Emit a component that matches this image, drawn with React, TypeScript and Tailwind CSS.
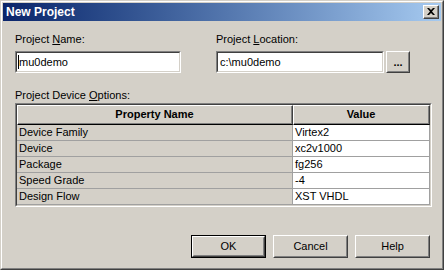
import React from 'react';

const rows = [
    { name: 'Device Family', value: 'Virtex2' },
    { name: 'Device', value: 'xc2v1000' },
    { name: 'Package', value: 'fg256' },
    { name: 'Speed Grade', value: '-4' },
    { name: 'Design Flow', value: 'XST VHDL' },
];

const Field = ({ value, caret }: { value: string; caret?: boolean }) => (
    <div className="h-[22px] flex-1 border border-t-[#808080] border-l-[#808080] border-r-white border-b-white">
        <div className="h-full border border-t-[#404040] border-l-[#404040] border-r-[#d4d0c8] border-b-[#d4d0c8] bg-white flex items-center pl-px">
            {caret && <span className="w-px h-[14px] bg-black" />}
            <span className={caret ? '' : 'pl-px'}>{value}</span>
        </div>
    </div>
);

const Button = ({ label, isDefault, className }: { label: string; isDefault?: boolean; className?: string }) => (
    <div className={`${isDefault ? 'border border-black' : ''} ${className ?? ''}`}>
        <div className="h-full border border-t-white border-l-white border-r-[#404040] border-b-[#404040]">
            <div className="h-full border border-t-[#d4d0c8] border-l-[#d4d0c8] border-r-[#808080] border-b-[#808080] flex items-center justify-center">
                {label}
            </div>
        </div>
    </div>
);

const HeaderCell = ({ label, className }: { label: string; className?: string }) => (
    <div className={`h-[20px] border border-t-white border-l-white border-r-[#404040] border-b-black ${className ?? ''}`}>
        <div className="h-full border-r border-b border-r-[#808080] border-b-[#808080] flex items-center justify-center font-bold">
            {label}
        </div>
    </div>
);

export default function App() {
    return (
        <div className="w-[444px] h-[270px] bg-[#d4d0c8] text-black text-[11px] leading-[13px] font-['Liberation_Sans',Arial,sans-serif] border border-t-[#d4d0c8] border-l-[#d4d0c8] border-r-[#404040] border-b-[#404040]">
            <div className="h-full border border-t-white border-l-white border-r-[#808080] border-b-[#808080] p-px flex flex-col">
                {/* Title bar */}
                <div className="h-[18px] shrink-0 bg-gradient-to-r from-[#0a246a] to-[#a6caf0] flex items-center justify-between pl-[3px] pr-[2px]">
                    <span className="text-white font-bold text-[12px]">New Project</span>
                    <div className="w-[16px] h-[14px] border border-t-white border-l-white border-r-[#404040] border-b-[#404040] bg-[#d4d0c8]">
                        <div className="h-full border-r border-b border-r-[#808080] border-b-[#808080] flex items-center justify-center">
                            <svg width="8" height="7" viewBox="0 0 8 7">
                                <path d="M0 0h2l2 2 2-2h2L5 3.5 8 7H6L4 5 2 7H0l3-3.5z" fill="#000" />
                            </svg>
                        </div>
                    </div>
                </div>

                {/* Body */}
                <div className="flex-1 flex flex-col pl-[12px] pr-[8px] pt-[12px]">
                    <div className="flex gap-[35px]">
                        <div className="w-[166px] flex flex-col gap-[5px]">
                            <span>Project <u>N</u>ame:</span>
                            <div className="flex"><Field value="mu0demo" caret /></div>
                        </div>
                        <div className="w-[194px] flex flex-col gap-[5px]">
                            <span>Project <u>L</u>ocation:</span>
                            <div className="flex gap-[2px]">
                                <Field value="c:\mu0demo" />
                                <Button label="..." className="w-[24px] h-[22px] font-bold" />
                            </div>
                        </div>
                    </div>

                    <span className="mt-[16px] mb-[1px]">Project Device <u>O</u>ptions:</span>

                    {/* Table */}
                    <div className="w-[417px] border border-t-[#808080] border-l-[#808080] border-r-white border-b-white">
                        <div className="border border-t-[#404040] border-l-[#404040] border-r-[#d4d0c8] border-b-[#d4d0c8] flex flex-col">
                            <div className="flex">
                                <HeaderCell label="Property Name" className="w-[276px]" />
                                <HeaderCell label="Value" className="flex-1" />
                            </div>
                            {rows.map((r) => (
                                <div key={r.name} className="flex h-[16px]">
                                    <div className="w-[276px] border-r border-b border-[#a0a0a0] pl-[2px] flex items-center">
                                        {r.name}
                                    </div>
                                    <div className="flex-1 bg-white border-r border-b border-[#a0a0a0] pl-[2px] flex items-center">
                                        {r.value}
                                    </div>
                                </div>
                            ))}
                        </div>
                    </div>

                    {/* Buttons */}
                    <div className="mt-[28px] flex justify-end gap-[7px] pr-[3px]">
                        <Button label="OK" isDefault className="w-[75px] h-[23px]" />
                        <Button label="Cancel" className="w-[75px] h-[23px]" />
                        <Button label="Help" className="w-[75px] h-[23px]" />
                    </div>
                </div>
            </div>
        </div>
    );
}
